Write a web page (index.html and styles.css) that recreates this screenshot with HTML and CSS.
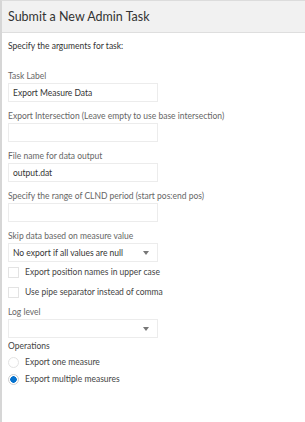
FILE: index.html
```html
<!DOCTYPE html>
<html lang="en">
<head>
    <meta charset="UTF-8">
    <meta name="viewport" content="width=device-width, initial-scale=1.0">
    <title>Submit a New Admin Task</title>
    <link rel="stylesheet" href="styles.css">
</head>
<body>
    <div class="dialog">
        <header class="dialog-header">
            <h1 class="dialog-title">Submit a New Admin Task</h1>
        </header>
        <form class="dialog-body">
            <p class="intro">Specify the arguments for task:</p>

            <div class="field">
                <label class="field-label">Task Label</label>
                <div class="text-box">Export Measure Data</div>
            </div>
            <div class="field">
                <label class="field-label">Export Intersection (Leave empty to use base intersection)</label>
                <div class="text-box"></div>
            </div>
            <div class="field">
                <label class="field-label">File name for data output</label>
                <div class="text-box">output.dat</div>
            </div>
            <div class="field">
                <label class="field-label">Specify the range of CLND period (start pos:end pos)</label>
                <div class="text-box"></div>
            </div>
            <div class="field select-field">
                <label class="field-label">Skip data based on measure value</label>
                <div class="text-box select">
                    <span>No export if all values are null</span>
                    <span class="arrow"></span>
                </div>
            </div>

            <div class="check-row">
                <span class="check-box"></span>
                <span>Export position names in upper case</span>
            </div>
            <div class="check-row">
                <span class="check-box"></span>
                <span>Use pipe separator instead of comma</span>
            </div>

            <div class="field log-field">
                <label class="field-label">Log level</label>
                <div class="text-box select">
                    <span></span>
                    <span class="arrow"></span>
                </div>
            </div>

            <div class="radio-group">
                <span class="group-label">Operations</span>
                <div class="radio-row">
                    <span class="radio"></span>
                    <span>Export one measure</span>
                </div>
                <div class="radio-row">
                    <span class="radio checked"></span>
                    <span>Export multiple measures</span>
                </div>
            </div>
        </form>
    </div>
</body>
</html>
```

FILE: styles.css
```css
html {
    box-sizing: border-box;
    font-family: 'Lato', 'Open Sans', sans-serif;
    font-size: 8.5px;
}

*, *::after, *::before {
    box-sizing: inherit;
}

body {
    margin: 0;
    background-color: #fff;
    color: #333;
}

.dialog {
    height: 422px;
    border-left: 2px solid #d6d6d6;
    border-top: 1px solid #dcdcdc;
}

.dialog-header {
    height: 32px;
    padding: 0 6px;
    background-color: #f1f1f1;
    border-bottom: 1px solid #dedede;
    display: flex;
    align-items: center;
}

.dialog-title {
    margin: 0;
    font-size: 12.5px;
    font-weight: normal;
    color: #333;
}

.dialog-body {
    padding: 7px 6px;
}

.intro {
    margin: 0 0 18px;
    line-height: 12px;
}

.field {
    display: flex;
    flex-direction: column;
    margin-bottom: 8px;
}

.field-label {
    color: #666;
    line-height: 12px;
    margin-bottom: 1px;
}

.text-box {
    width: 150px;
    height: 19px;
    padding: 0 4px;
    border: 1px solid #ececec;
    display: flex;
    align-items: center;
    color: #333;
}

.select {
    justify-content: space-between;
}

.arrow {
    width: 0;
    height: 0;
    margin-right: 4px;
    border-left: 3.5px solid transparent;
    border-right: 3.5px solid transparent;
    border-top: 4px solid #777;
}

.select-field {
    margin-bottom: 4px;
}

.check-row, .radio-row {
    display: flex;
    align-items: center;
    gap: 6px;
    height: 12px;
    margin-bottom: 8px;
}

.check-row {
    color: #444;
}

.check-box {
    width: 11px;
    height: 11px;
    border: 1px solid #e3e3e3;
}

.log-field {
    margin-top: 4px;
    margin-bottom: 2px;
}

.radio-group {
    display: flex;
    flex-direction: column;
}

.group-label {
    line-height: 12px;
    margin-bottom: 4px;
    color: #444;
}

.radio-row {
    margin-bottom: 5px;
    color: #444;
}

.radio {
    width: 11px;
    height: 11px;
    border-radius: 50%;
    border: 1px solid #e3e3e3;
    background-color: #fff;
}

.radio.checked {
    border-color: #d0d0d0;
    background: radial-gradient(circle, #0572ce 0 3px, #fff 3.5px);
}
```
